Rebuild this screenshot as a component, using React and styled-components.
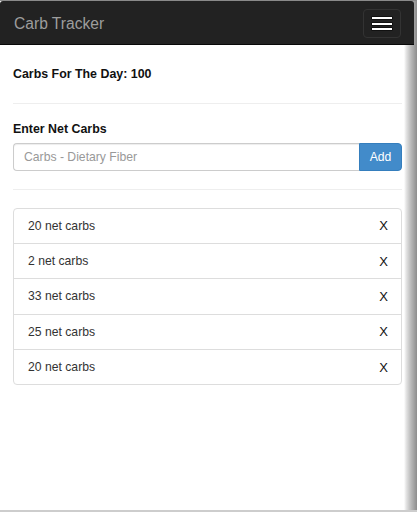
import React from "react";
import styled, { createGlobalStyle } from "styled-components";

const Global = createGlobalStyle`
  html, body { margin: 0; padding: 0; background: #fff; }
  body { font-family: "Liberation Sans", Arial, sans-serif; color: #333; }
  * { box-sizing: border-box; }
`;

const Frame = styled.div`
  width: 417px;
  height: 512px;
  display: flex;
  flex-direction: column;
  border-top: 1px solid #8a8a8a;
  border-bottom: 2px solid #cdcdcd;
  background: linear-gradient(to right, #fff 0, #fff 404px, #e6e6e6 406px, #b8b8b8 411px, #8c8c8c 417px);
  overflow: hidden;
`;

const Navbar = styled.nav`
  width: 414px;
  height: 44px;
  flex: none;
  display: flex;
  align-items: center;
  justify-content: space-between;
  padding: 0 13px 0 14px;
  background: #222;
  border-bottom: 1px solid #080808;
  border-radius: 3px 3px 0 0;
`;

const Brand = styled.a`
  font-size: 15.6px;
  color: #9d9d9d;
  text-decoration: none;
  line-height: 20px;
  margin-top: 3px;
`;

const Toggle = styled.button`
  width: 38px;
  height: 29px;
  display: flex;
  flex-direction: column;
  align-items: center;
  justify-content: center;
  gap: 3.5px;
  padding: 0;
  margin-top: 2px;
  background: transparent;
  border: 1px solid #333;
  border-radius: 4px;
`;

const Bar = styled.span`
  display: block;
  width: 20px;
  height: 2px;
  background: #fff;
  box-shadow: 0 0 0 0.5px #000;
`;

const Content = styled.main`
  flex: 1;
  padding: 21px 15px 0 13px;
  display: flex;
  flex-direction: column;
`;

const Heading = styled.div`
  font-size: 12.4px;
  font-weight: bold;
  line-height: 17px;
  color: #111;
`;

const Rule = styled.hr`
  width: 100%;
  margin: ${(p) => p.$top}px 0 ${(p) => p.$bottom}px;
  border: 0;
  border-top: 1px solid #eee;
  height: 0;
`;

const Label = styled.label`
  font-size: 12.4px;
  font-weight: bold;
  line-height: 17px;
  color: #111;
  margin-bottom: 4.5px;
`;

const InputGroup = styled.div`
  display: flex;
  height: 28px;
`;

const Input = styled.input`
  flex: 1;
  min-width: 0;
  height: 28px;
  padding: 0 10px;
  font-family: inherit;
  font-size: 12.2px;
  color: #555;
  border: 1px solid #ccc;
  border-right: 0;
  border-radius: 4px 0 0 4px;
  box-shadow: inset 0 1px 1px rgba(0, 0, 0, 0.075);
  outline: none;
  &::placeholder { color: #999; }
`;

const AddButton = styled.button`
  width: 43px;
  height: 28px;
  padding: 0;
  font-family: inherit;
  font-size: 12.2px;
  color: #fff;
  background: #428bca;
  border: 1px solid #357ebd;
  border-radius: 0 4px 4px 0;
`;

const List = styled.ul`
  list-style: none;
  margin: 0;
  padding: 0;
`;

const Item = styled.li`
  height: 36.4px;
  margin-bottom: -1px;
  display: flex;
  align-items: center;
  justify-content: space-between;
  padding: 0 13px 0 14px;
  font-size: 12.2px;
  color: #333;
  border: 1px solid #ddd;
  &:first-child { border-radius: 4px 4px 0 0; }
  &:last-child { border-radius: 0 0 4px 4px; margin-bottom: 0; }
`;

const Remove = styled.span`
  font-size: 13px;
  color: #111;
  cursor: pointer;
`;

const entries = [20, 2, 33, 25, 20];

export default function App() {
  return (
    <>
      <Global />
      <Frame>
        <Navbar>
          <Brand href="#">Carb Tracker</Brand>
          <Toggle aria-label="menu">
            <Bar />
            <Bar />
            <Bar />
          </Toggle>
        </Navbar>
        <Content>
          <Heading>Carbs For The Day: 100</Heading>
          <Rule $top={20} $bottom={17} />
          <Label>Enter Net Carbs</Label>
          <InputGroup>
            <Input placeholder="Carbs - Dietary Fiber" />
            <AddButton>Add</AddButton>
          </InputGroup>
          <Rule $top={18} $bottom={18} />
          <List>
            {entries.map((n, i) => (
              <Item key={i}>
                <span>{n} net carbs</span>
                <Remove>X</Remove>
              </Item>
            ))}
          </List>
        </Content>
      </Frame>
    </>
  );
}
